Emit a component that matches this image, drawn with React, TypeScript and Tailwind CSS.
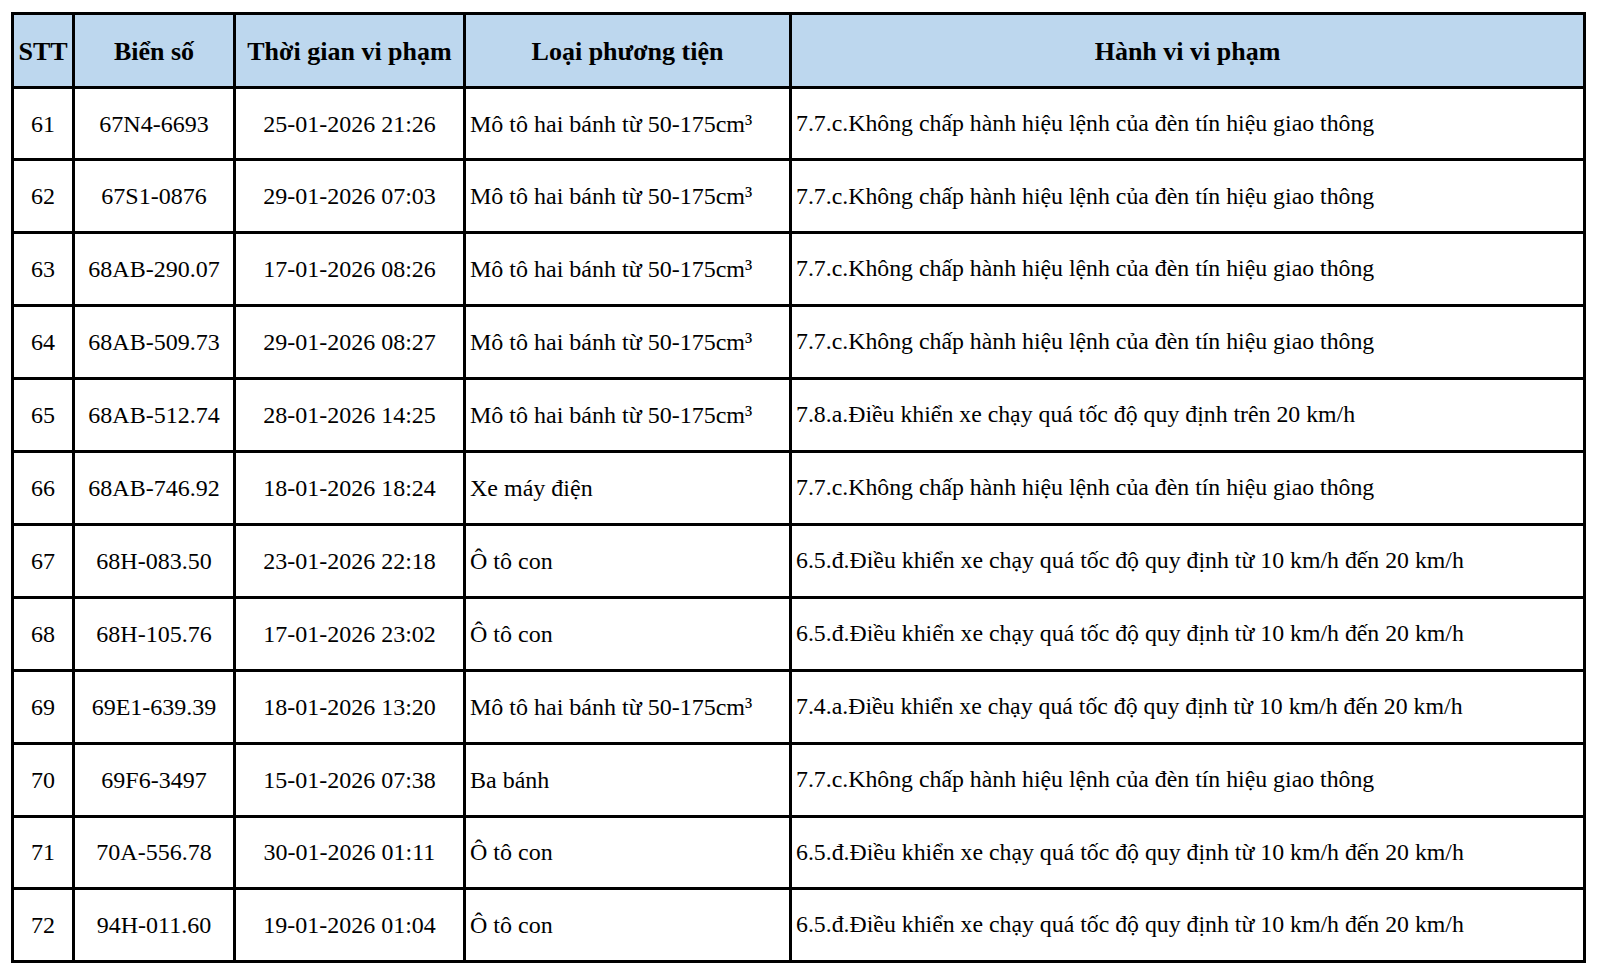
const rows: [string, string, string, string, string][] = [
  ["61", "67N4-6693", "25-01-2026 21:26", "Mô tô hai bánh từ 50-175cm³", "7.7.c.Không chấp hành hiệu lệnh của đèn tín hiệu giao thông"],
  ["62", "67S1-0876", "29-01-2026 07:03", "Mô tô hai bánh từ 50-175cm³", "7.7.c.Không chấp hành hiệu lệnh của đèn tín hiệu giao thông"],
  ["63", "68AB-290.07", "17-01-2026 08:26", "Mô tô hai bánh từ 50-175cm³", "7.7.c.Không chấp hành hiệu lệnh của đèn tín hiệu giao thông"],
  ["64", "68AB-509.73", "29-01-2026 08:27", "Mô tô hai bánh từ 50-175cm³", "7.7.c.Không chấp hành hiệu lệnh của đèn tín hiệu giao thông"],
  ["65", "68AB-512.74", "28-01-2026 14:25", "Mô tô hai bánh từ 50-175cm³", "7.8.a.Điều khiển xe chạy quá tốc độ quy định trên 20 km/h"],
  ["66", "68AB-746.92", "18-01-2026 18:24", "Xe máy điện", "7.7.c.Không chấp hành hiệu lệnh của đèn tín hiệu giao thông"],
  ["67", "68H-083.50", "23-01-2026 22:18", "Ô tô con", "6.5.đ.Điều khiển xe chạy quá tốc độ quy định từ 10 km/h đến 20 km/h"],
  ["68", "68H-105.76", "17-01-2026 23:02", "Ô tô con", "6.5.đ.Điều khiển xe chạy quá tốc độ quy định từ 10 km/h đến 20 km/h"],
  ["69", "69E1-639.39", "18-01-2026 13:20", "Mô tô hai bánh từ 50-175cm³", "7.4.a.Điều khiển xe chạy quá tốc độ quy định từ 10 km/h đến 20 km/h"],
  ["70", "69F6-3497", "15-01-2026 07:38", "Ba bánh", "7.7.c.Không chấp hành hiệu lệnh của đèn tín hiệu giao thông"],
  ["71", "70A-556.78", "30-01-2026 01:11", "Ô tô con", "6.5.đ.Điều khiển xe chạy quá tốc độ quy định từ 10 km/h đến 20 km/h"],
  ["72", "94H-011.60", "19-01-2026 01:04", "Ô tô con", "6.5.đ.Điều khiển xe chạy quá tốc độ quy định từ 10 km/h đến 20 km/h"],
];

const headers = ["STT", "Biển số", "Thời gian vi phạm", "Loại phương tiện", "Hành vi vi phạm"];

export default function App() {
  return (
    <div className="w-[1600px] h-[974px] bg-white pt-[12px] pl-[11px] font-['Liberation_Serif',serif] text-black">
      <div className="grid w-max grid-cols-[58px_158px_227px_323px_791px] auto-rows-[69.9px] grid-rows-[70.6px] gap-[3px] border-[3px] border-black bg-black">
        {headers.map((h) => (
          <div key={h} className="flex items-center justify-center bg-[#bdd7ee] pt-[3px] text-[26px] font-bold whitespace-nowrap">
            {h}
          </div>
        ))}
        {rows.map((r) => (
          <div key={r[0]} className="contents">
            <div className="flex items-center justify-center bg-white text-[24px]">{r[0]}</div>
            <div className="flex items-center justify-center bg-white text-[24px]">{r[1]}</div>
            <div className="flex items-center justify-center bg-white text-[24px]">{r[2]}</div>
            <div className="flex items-center bg-white pl-[4px] text-[24px] whitespace-nowrap">{r[3]}</div>
            <div className="flex items-center bg-white pl-[4px] text-[23.8px] whitespace-nowrap">{r[4]}</div>
          </div>
        ))}
      </div>
    </div>
  );
}
